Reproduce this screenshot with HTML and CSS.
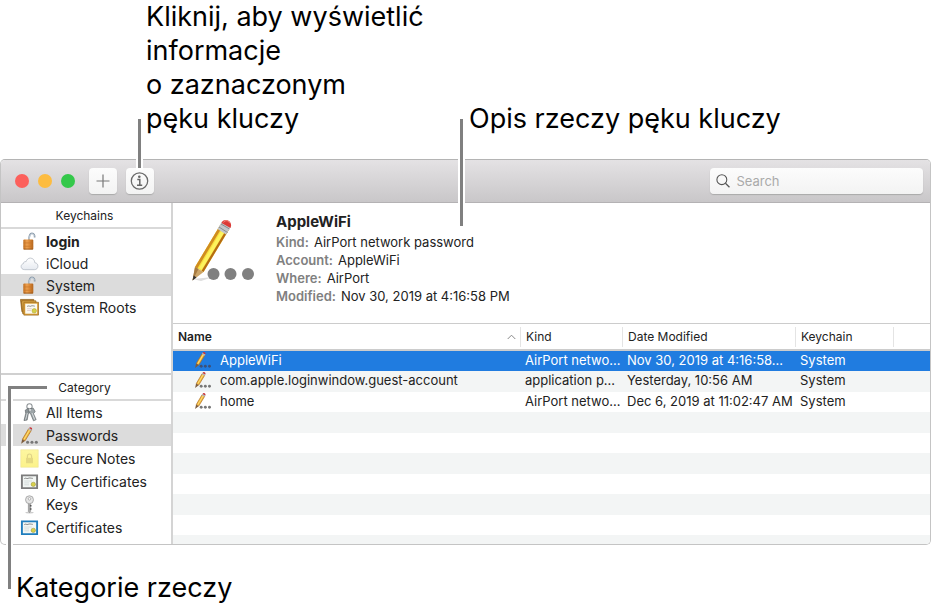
FILE: index.html
```html
<!DOCTYPE html>
<html lang="pl">
<head>
  <meta charset="UTF-8">
  <meta name="viewport" content="width=device-width, initial-scale=1.0">
  <title>Keychain Access</title>
  <link rel="stylesheet" href="styles.css">
</head>
<body>
  <!-- Icons shared by the sidebar and the table -->
  <svg class="sprite" aria-hidden="true">
    <defs>
      <linearGradient id="brass" x1="0" x2="1" y1="0" y2="0">
        <stop offset="0" stop-color="#c06c1c"/>
        <stop offset="0.35" stop-color="#eda050"/>
        <stop offset="0.6" stop-color="#dd8a38"/>
        <stop offset="1" stop-color="#b2641c"/>
      </linearGradient>
      <linearGradient id="cloud-fill" x1="0" x2="0" y1="0" y2="1">
        <stop offset="0" stop-color="#fff"/>
        <stop offset="1" stop-color="#e6eaf0"/>
      </linearGradient>
      <linearGradient id="note-fill" x1="0" x2="0" y1="0" y2="1">
        <stop offset="0" stop-color="#fdf6a0"/>
        <stop offset="1" stop-color="#fcf28a"/>
      </linearGradient>
    </defs>
    <symbol id="lock" viewBox="0 0 20 20">
      <path d="M9.500 8.500C9.500 4 10.500 1.500 12.600 1.500C14.800 1.500 15.600 3.500 15.400 5.800" fill="none" stroke="#8d9dac" stroke-width="1.800"/>
      <path d="M9.700 8C9.800 4.500 10.800 2 12.600 2C14 2 14.800 3 14.900 4.600" fill="none" stroke="#e4eaf0" stroke-width="0.700"/>
      <rect x="3.500" y="8" width="10.500" height="10.500" rx="1" fill="url(#brass)"/>
      <path d="M3.800 11.500h10M3.800 15h10" stroke="#c47428" stroke-width="0.700"/>
      <path d="M4 18h9.500" stroke="#8f4f14" stroke-width="0.800"/>
    </symbol>
    <symbol id="cloud" viewBox="0 0 20 20">
      <path d="M5 16.500C2.500 16.500 1.200 15 1.200 13.200C1.200 11.500 2.300 10.400 3.700 10.100C3.600 8.600 5 7.600 6.400 8.100C7 5.800 8.800 4.300 10.900 4.300C13.600 4.300 15.500 6.500 15.600 9.200C17.800 9.400 18.900 10.900 18.900 12.800C18.900 15 17.300 16.500 15.200 16.500Z" fill="url(#cloud-fill)" stroke="#a9b0bb" stroke-width="0.700"/>
    </symbol>
    <symbol id="roots" viewBox="0 0 20 20">
      <path d="M.5 1.500h14v13H2z" fill="#c48a34" stroke="#855410" stroke-width="0.700"/>
      <path d="M1.800 3h15v13.500h-14z" fill="#e4b050" stroke="#8b5a14" stroke-width="0.700"/>
      <path d="M4 4.500h15.500v13.500H4z" fill="#dba03a" stroke="#94621a" stroke-width="0.700"/>
      <path d="M5.500 6h12.500v10.500H5.500z" fill="#fbfaf2"/>
      <path d="M7.500 8.800c2-1.200 3 .6 4-.2s2.500-.3 4 0" fill="none" stroke="#777" stroke-width="0.900"/>
      <path d="M7.500 11.300h5M7.500 13.200h4" stroke="#d4b8c0" stroke-width="0.700"/>
      <circle cx="15" cy="13.500" r="2.400" fill="#d6d048" stroke="#a39b26" stroke-width="0.500"/>
    </symbol>
    <symbol id="all-keys" viewBox="0 0 20 20">
      <ellipse cx="10" cy="3.800" rx="2.800" ry="3" fill="none" stroke="#8b9194" stroke-width="1.100"/>
      <path d="M5.500 7.500L9 5.500l2.200 3.200-2.500 3L7.500 18l-3.300.5L6 11z" fill="#8b9396" stroke="#50575a" stroke-width="0.600"/>
      <path d="M10 6l4-.5 2 3.500-1.800 2.200 2.800 6.300-2.800 1.300-3-7.300-2-2z" fill="#9da5a8" stroke="#50575a" stroke-width="0.600"/>
      <path d="M7.700 10.500l-1.800 7M12.700 10.500l2.800 7" stroke="#e8ecee" stroke-width="0.800"/>
      <circle cx="10.500" cy="7.300" r="0.900" fill="#f4f4f4"/>
    </symbol>
    <symbol id="pencil" viewBox="0 0 64 64">
      <path d="M2 60L22 58 10 62z" fill="#ddd"/>
      <path d="M4 48L29.500 5.500 38 10.500 12.500 53z" fill="#f8de3c"/>
      <path d="M4 48L29.500 5.500 31.800 6.900 6.300 49.500z" fill="#d08c20"/>
      <path d="M8 49L32.500 8 35.500 10 10.500 51z" fill="#fdf35e"/>
      <path d="M10.500 52L36 9.500 38 10.500 12.500 53z" fill="#b56c12"/>
      <path d="M4 48L12.500 53 1.500 61.500z" fill="#cba468"/>
      <path d="M4 48L7.500 50 1.500 61.500z" fill="#a67a40"/>
      <path d="M2.700 56.500L5.500 58.500 1.500 61.500z" fill="#333"/>
      <path d="M26.500 10L31 2.500 40 7.500 35 15.500z" fill="#c3c6c9"/>
      <path d="M28 8l8.500 5.500M30 5l8.500 5" stroke="#888c90" stroke-width="1"/>
      <path d="M30.500 4C32-1.500 42.500 1 39.500 9z" fill="#dc3a36"/>
      <path d="M32.500 3.500C34 .5 38 1.500 38.500 4" fill="none" stroke="#f58a80" stroke-width="1"/>
      <circle cx="22.500" cy="55" r="6" fill="#808080"/>
      <circle cx="39.500" cy="55" r="6" fill="#808080"/>
      <circle cx="57" cy="55" r="6" fill="#808080"/>
    </symbol>
    <symbol id="pencil-small" viewBox="0 0 20 20">
      <path d="M2.500 14L9 3l3 1.600L5.300 15.600z" fill="#f3b93c" stroke="#a8661c" stroke-width="0.700"/>
      <path d="M4.300 14L10 4.400" stroke="#fbe48a" stroke-width="0.900"/>
      <path d="M2.300 14L5.200 15.700 1.200 18.800z" fill="#7d5c3c"/>
      <path d="M8.700 3.700L9.800 1.800 12.800 3.500 11.700 5.300z" fill="#b5b9c0"/>
      <path d="M9.600 2.200C10.400.2 13.600 1.600 12.600 3.900z" fill="#c93034"/>
      <circle cx="8" cy="17" r="1.600" fill="currentColor"/>
      <circle cx="12.600" cy="17" r="1.600" fill="currentColor"/>
      <circle cx="17.200" cy="17" r="1.600" fill="currentColor"/>
    </symbol>
    <symbol id="note" viewBox="0 0 20 20">
      <path d="M.8.800h18.400v18.400H.8z" fill="url(#note-fill)" stroke="#efe391" stroke-width="0.600"/>
      <path d="M7.800 9.500V7.500a2.200 2.200 0 0 1 4.400 0v2" fill="none" stroke="#e0d488" stroke-width="1.200"/>
      <path d="M6.300 9.300h7.400v5.700H6.300z" fill="#e5d983"/>
    </symbol>
    <symbol id="certificate" viewBox="0 0 20 20">
      <path d="M2 3.500h16v13.500H2z" fill="#f2f6f4" stroke="currentColor" stroke-width="2"/>
      <path d="M4.500 7c1.500-1.300 2.500.5 4-.3s2.500-.2 5 0" fill="none" stroke="#777" stroke-width="0.900"/>
      <path d="M4.500 9.500h8M4.500 11.500h5M4.500 13.500h5" stroke="#c9d2d2" stroke-width="0.700"/>
      <circle cx="14" cy="13" r="2.300" fill="#d8d04c" stroke="#8f8a30" stroke-width="0.500"/>
    </symbol>
    <symbol id="key" viewBox="0 0 20 20">
      <ellipse cx="10" cy="18.500" rx="4.500" ry="0.900" fill="#ccc"/>
      <path d="M8.800 8h2.400v9L10 18.500l-1.200-1.200z" fill="#aaa" stroke="#777" stroke-width="0.500"/>
      <path d="M10.400 10.500h1.700v1.600h-1.700zM10.400 14h1.700v1.600h-1.700z" fill="#555"/>
      <circle cx="10" cy="5" r="4.200" fill="#e4e4e4" stroke="#999" stroke-width="0.800"/>
      <circle cx="10" cy="4" r="1.300" fill="#fff" stroke="#888" stroke-width="0.600"/>
    </symbol>
  </svg>

  <div class="notes">
    <p class="note note-info">Kliknij, aby wyświetlić informacje<br>o zaznaczonym<br>pęku kluczy</p>
    <p class="note note-details">Opis rzeczy pęku kluczy</p>
  </div>

  <main class="window">
    <header class="toolbar">
      <div class="lights">
        <button class="light close" type="button" aria-label="Close"></button>
        <button class="light minimize" type="button" aria-label="Minimize"></button>
        <button class="light zoom" type="button" aria-label="Zoom"></button>
      </div>
      <button class="tool" type="button" aria-label="Add">
        <svg width="28" height="26" viewBox="0 0 28 26"><path d="M14 6.500v13M7.500 13h13" stroke="#777" stroke-width="1.200"/></svg>
      </button>
      <button class="tool" type="button" aria-label="Info">
        <svg width="28" height="26" viewBox="0 0 28 26">
          <circle cx="13.500" cy="13" r="8.200" fill="none" stroke="#6a6a6a" stroke-width="1.300"/>
          <circle cx="13.300" cy="8.800" r="1.300" fill="#666"/>
          <path d="M11.300 11.500h2.500v5.500M11 17.200h5.200" fill="none" stroke="#666" stroke-width="1.500"/>
        </svg>
      </button>
      <label class="search">
        <svg width="16" height="16" viewBox="0 0 16 16"><circle cx="6.500" cy="6.500" r="5.500" fill="none" stroke="#555" stroke-width="1.200"/><path d="M10.500 10.500L15 15" stroke="#555" stroke-width="1.400"/></svg>
        <input type="search" placeholder="Search" aria-label="Search">
      </label>
    </header>

    <div class="content">
      <nav class="sidebar">
        <section class="keychains">
          <h2>Keychains</h2>
          <ul>
            <li><a class="default" href="#"><svg><use href="#lock"/></svg>login</a></li>
            <li><a href="#"><svg><use href="#cloud"/></svg>iCloud</a></li>
            <li><a class="selected" href="#"><svg><use href="#lock"/></svg>System</a></li>
            <li><a href="#"><svg><use href="#roots"/></svg>System Roots</a></li>
          </ul>
        </section>
        <section class="category">
          <h2>Category</h2>
          <ul>
            <li><a href="#"><svg><use href="#all-keys"/></svg>All Items</a></li>
            <li><a class="selected" href="#"><svg class="dots"><use href="#pencil-small"/></svg>Passwords</a></li>
            <li><a href="#"><svg><use href="#note"/></svg>Secure Notes</a></li>
            <li><a href="#"><svg class="gray"><use href="#certificate"/></svg>My Certificates</a></li>
            <li><a href="#"><svg><use href="#key"/></svg>Keys</a></li>
            <li><a href="#"><svg class="blue"><use href="#certificate"/></svg>Certificates</a></li>
          </ul>
        </section>
      </nav>

      <div class="main">
        <section class="details">
          <svg class="item-icon"><use href="#pencil"/></svg>
          <div>
            <h1>AppleWiFi</h1>
            <dl>
              <div><dt>Kind:</dt><dd>AirPort network password</dd></div>
              <div><dt>Account:</dt><dd>AppleWiFi</dd></div>
              <div><dt>Where:</dt><dd>AirPort</dd></div>
              <div><dt>Modified:</dt><dd>Nov 30, 2019 at 4:16:58 PM</dd></div>
            </dl>
          </div>
        </section>

        <div class="items">
          <table>
            <colgroup>
              <col>
              <col class="col-kind">
              <col class="col-date">
              <col class="col-keychain">
              <col class="col-rest">
            </colgroup>
            <thead>
              <tr>
                <th class="sorted"><span>Name<svg width="9" height="6" viewBox="0 0 9 6"><path d="M.7 5L4.500 1.200 8.300 5" fill="none" stroke="#888" stroke-width="1"/></svg></span></th>
                <th>Kind</th>
                <th>Date Modified</th>
                <th>Keychain</th>
                <th></th>
              </tr>
            </thead>
            <tbody>
              <tr class="selected">
                <td class="name"><svg class="dots"><use href="#pencil-small"/></svg>AppleWiFi</td>
                <td>AirPort netwo…</td>
                <td>Nov 30, 2019 at 4:16:58…</td>
                <td>System</td>
                <td></td>
              </tr>
              <tr>
                <td class="name"><svg class="dots"><use href="#pencil-small"/></svg>com.apple.loginwindow.guest-account</td>
                <td>application p…</td>
                <td>Yesterday, 10:56 AM</td>
                <td>System</td>
                <td></td>
              </tr>
              <tr>
                <td class="name"><svg class="dots"><use href="#pencil-small"/></svg>home</td>
                <td>AirPort netwo…</td>
                <td>Dec 6, 2019 at 11:02:47 AM</td>
                <td>System</td>
                <td></td>
              </tr>
            </tbody>
          </table>
          <div class="stripes"></div>
        </div>
      </div>
    </div>
  </main>

  <p class="note note-category">Kategorie rzeczy</p>
</body>
</html>
```

FILE: styles.css
```css
*, *::before {
  box-sizing: border-box;
}

body {
  margin: 0;
  padding-right: 3px;
  background-color: #fff;
  color: #222;
  font-family: Inter, "Liberation Sans", sans-serif;
  font-size: 13px;
}

h1, h2, p, ul, dl, dd {
  margin: 0;
  padding: 0;
}

ul {
  list-style: none;
}

.sprite {
  position: absolute;
  width: 0;
  height: 0;
}

/* Callouts */
.notes {
  display: flex;
  align-items: flex-end;
  height: 159px;
  padding: 0 0 23px 146px;
}

.note {
  position: relative;
  color: #000;
  font-size: 27px;
  font-weight: 400;
  line-height: 34px;
}

.note-info {
  width: 323px;
  padding-right: 30px;
}

.note-details {
  white-space: nowrap;
}

.note::before {
  content: "";
  position: absolute;
  z-index: 2;
  width: 3px;
  background-color: #808080;
  box-shadow: 0 0 0 2px #fff;
}

.note-info::before {
  left: -8px;
  bottom: -32px;
  height: 49px;
}

.note-details::before {
  left: -9px;
  top: 17px;
  height: 107px;
}

.note-category {
  padding: 26px 0 0 16px;
}

.note-category::before {
  left: 8px;
  bottom: 16px;
  width: 39px;
  height: 203px;
  border: solid #808080;
  border-width: 3px 0 0 3px;
  background: none;
  box-shadow: -2px 0 0 #fff, inset 2px 0 0 #fff;
}

/* Window */
.window {
  border: 1px solid #c4c4c4;
  border-top-color: #b4b4b4;
  border-radius: 5px;
  overflow: hidden;
}

.toolbar {
  display: flex;
  align-items: center;
  height: 43px;
  padding: 0 7px 0 14px;
  border-bottom: 1px solid #b4b2b4;
  background: linear-gradient(#e4e2e4, #c9c7c9);
}

.lights {
  display: flex;
  gap: 9px;
  margin-right: 14px;
}

.light {
  width: 14px;
  height: 14px;
  padding: 0;
  border: none;
  border-radius: 50%;
}

.close {
  background-color: #fc605c;
}

.minimize {
  background-color: #fdbc40;
}

.zoom {
  background-color: #34c84a;
}

.tool {
  width: 28px;
  height: 26px;
  margin-right: 9px;
  padding: 0;
  border: none;
  border-radius: 4px;
  background: linear-gradient(#fcfcfc, #f3f3f3);
  box-shadow: 0 1px 1px #aaa;
}

.search {
  display: flex;
  align-items: center;
  gap: 6px;
  width: 213px;
  height: 26px;
  margin-left: auto;
  padding: 0 6px;
  border-radius: 4px;
  background: linear-gradient(#fcfcfc, #f3f3f3);
  box-shadow: 0 1px 1px #aaa;
}

.search input {
  width: 100%;
  min-width: 0;
  padding: 0;
  border: none;
  outline: none;
  background: none;
  font: inherit;
}

.search input::placeholder {
  color: #aaa;
}

.content {
  display: flex;
}

/* Sidebar */
.sidebar {
  flex: none;
  width: 172px;
  border-right: 2px solid #d4d4d4;
}

.sidebar h2 {
  height: 26px;
  padding-right: 3px;
  border-bottom: 2px solid #d9d9d9;
  font-size: 12px;
  font-weight: 400;
  line-height: 25px;
  text-align: center;
}

.keychains {
  height: 170px;
}

.keychains ul {
  padding-top: 1px;
}

.category {
  border-top: 2px solid #d0d0d0;
}

.category ul {
  display: grid;
  gap: 1px;
  padding-bottom: 6px;
}

.sidebar a {
  display: flex;
  align-items: center;
  gap: 7px;
  height: 22px;
  padding-left: 19px;
  color: #222;
  font-size: 14px;
  text-decoration: none;
}

.sidebar a svg {
  width: 19px;
  height: 19px;
}

.sidebar a.default {
  font-weight: 700;
}

.sidebar a.selected {
  background-color: #dcdcdc;
}

.gray {
  color: #7c7c7c;
}

.blue {
  color: #1f7dbd;
}

.dots {
  color: #777;
}

/* Details */
.main {
  display: flex;
  flex-direction: column;
  flex: 1;
  min-width: 0;
}

.details {
  display: flex;
  height: 120px;
  padding: 10px 18px;
  gap: 21px;
}

.item-icon {
  width: 64px;
  height: 64px;
  margin-top: 6px;
}

.details h1 {
  margin-bottom: 2px;
  font-size: 15px;
  font-weight: 700;
  line-height: 18px;
}

.details dl {
  font-size: 13px;
  line-height: 18px;
}

.details dl div {
  display: flex;
  gap: 5px;
}

.details dt {
  color: #808080;
  font-weight: 600;
}

/* Items */
.items {
  display: flex;
  flex-direction: column;
  flex: 1;
  border-top: 1px solid #ccc;
}

table {
  width: 100%;
  border-collapse: separate;
  border-spacing: 0;
  table-layout: fixed;
}

.col-kind {
  width: 102px;
}

.col-date {
  width: 173px;
}

.col-keychain {
  width: 98px;
}

.col-rest {
  width: 36px;
}

th {
  height: 27px;
  padding: 0 0 0 5px;
  border-bottom: 2px solid #ccc;
  background: linear-gradient(#e4e4e4, #e4e4e4) right center / 1px 20px no-repeat;
  font-size: 12px;
  font-weight: 400;
  text-align: left;
}

th:last-child {
  background: none;
}

.sorted {
  font-weight: 600;
}

.sorted span {
  display: flex;
  align-items: center;
  justify-content: space-between;
  padding-right: 5px;
}

td {
  height: 20px;
  padding: 0 0 0 4px;
  line-height: 19px;
  vertical-align: top;
  white-space: nowrap;
}

tr:nth-child(even) td {
  height: 21px;
  background-color: #f3f5f5;
}

tr.selected td {
  background-color: #207ce0;
  color: #fff;
}

td.name {
  padding-left: 21px;
}

td svg {
  width: 18px;
  height: 18px;
  margin-right: 8px;
  vertical-align: top;
}

tr.selected .dots {
  color: #3c5078;
}

.stripes {
  flex: 1;
  background: repeating-linear-gradient(#f3f5f5 0 21px, #fff 21px 41px);
}
```
